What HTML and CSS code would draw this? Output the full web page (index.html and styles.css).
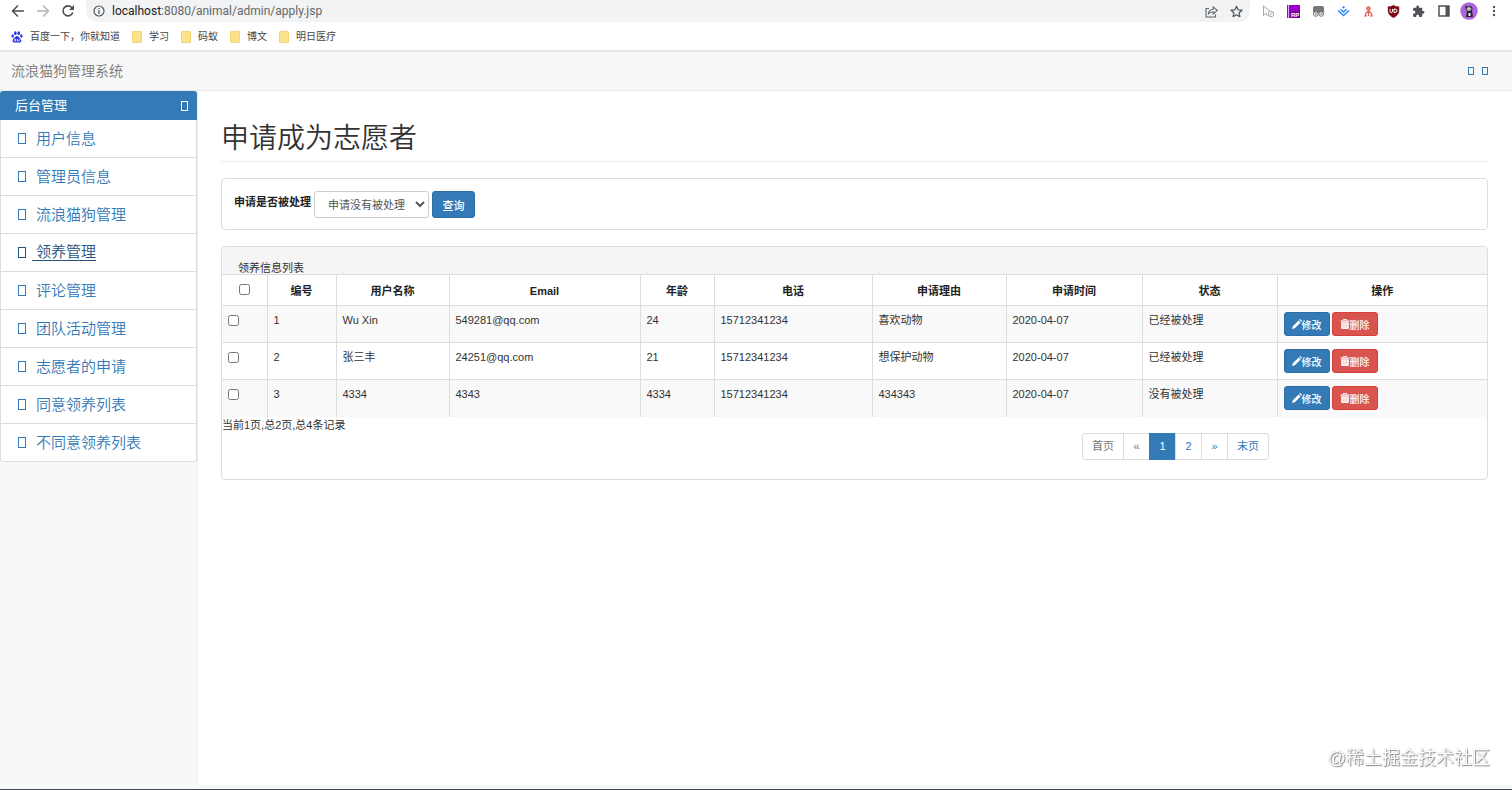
FILE: index.html
```html
<!DOCTYPE html>
<html lang="zh-CN">
<head>
  <meta charset="UTF-8">
  <meta name="viewport" content="width=device-width, initial-scale=1">
  <title>流浪猫狗管理系统</title>
  <link rel="stylesheet" href="styles.css">
</head>
<body>
  <!-- browser bar -->
  <header class="browser">
    <div class="toolbar">
      <button class="tool" aria-label="后退"><svg width="14" height="14" viewBox="0 0 14 14" fill="none" stroke="#4a4d51" stroke-width="1.5"><path d="M13 7H2M7 1.500L1.500 7L7 12.500"/></svg></button>
      <button class="tool" aria-label="前进"><svg width="14" height="14" viewBox="0 0 14 14" fill="none" stroke="#b4b6b9" stroke-width="1.5"><path d="M1 7h11M7 1.500L12.500 7L7 12.500"/></svg></button>
      <button class="tool" aria-label="刷新"><svg width="14" height="14" viewBox="0 0 14 14"><path d="M11.800 8.500A5 5 0 1 1 10.800 3.500L12 4.800" fill="none" stroke="#4a4d51" stroke-width="1.600"/><path d="M13 1v5H8z" fill="#4a4d51"/></svg></button>
      <div class="omnibox">
        <svg width="12" height="12" viewBox="0 0 12 12"><circle cx="6" cy="6" r="5" fill="none" stroke="#55585c" stroke-width="1.200"/><path d="M6 5.300V9M6 3v1.300" stroke="#55585c" stroke-width="1.300"/></svg>
        <span class="url"><span class="host">localhost</span>:8080/animal/admin/apply.jsp</span>
        <button class="tool" aria-label="分享"><svg width="13" height="13" viewBox="0 0 13 13" fill="none" stroke="#606368" stroke-width="1.100"><path d="M4 3.500H1v8.500h9.500V9.500"/><path d="M3.300 9C3.800 6 5.500 4.500 8.200 4.300V1.800L12.300 5.400L8.200 9V6.700C6 6.700 4.500 7.300 3.300 9z" stroke-linejoin="round"/></svg></button>
        <button class="tool" aria-label="收藏"><svg width="13" height="13" viewBox="0 0 13 13"><path d="M6.500 1.200L8.100 4.800L12 5.200L9.100 7.800L9.900 11.700L6.500 9.700L3.100 11.700L3.900 7.800L1 5.200L4.900 4.800z" fill="none" stroke="#505357" stroke-width="1.200" stroke-linejoin="round"/></svg></button>
      </div>
      <div class="extensions">
        <button class="tool" aria-label="光标扩展"><svg width="13" height="13" viewBox="0 0 13 13" fill="none" stroke="#aaa"><path d="M1.500 1v9.500L4 8.200L5.200 11M1.500 1L8.500 6.500"/><circle cx="9" cy="9" r="2.700"/><path d="M7.200 10.800L10.800 7.200"/></svg></button>
        <button class="tool" aria-label="RP"><svg width="13" height="13" viewBox="0 0 13 13"><path d="M0 0h13v13H0z" fill="#9900cc"/><path d="M1.500 0v13" stroke="#e9a8ff"/><path d="M3 6h10v7H3z" fill="#7a00a8"/><text x="4" y="12" font-family="Liberation Sans" font-size="6" font-weight="700" fill="#fff">RP</text></svg></button>
        <button class="tool" aria-label="脚本扩展"><svg width="13" height="13" viewBox="0 0 13 13"><path d="M3 1h7q2 0 2 2v5H1V3q0-2 2-2z" fill="#777"/><circle cx="3.800" cy="9" r="2.300" fill="#f4f4f4" stroke="#777"/><circle cx="9.200" cy="9" r="2.300" fill="#f4f4f4" stroke="#777"/><path d="M3.800 8v2M9.200 8v2" stroke="#777"/></svg></button>
        <button class="tool" aria-label="掘金"><svg width="13" height="13" viewBox="0 0 13 13" fill="none" stroke="#2684ff" stroke-width="1.500"><path d="M1 5.500L6.500 10.500L12 5.500M3.500 4.300L6.500 7L9.500 4.300"/><path d="M5 2.300L6.500 1L8 2.300L6.500 3.700z" fill="#2684ff" stroke="none"/></svg></button>
        <button class="tool" aria-label="网络扩展"><svg width="11" height="11" viewBox="0 0 11 11" fill="none" stroke="#e5604f" stroke-width="1.200"><circle cx="5.500" cy="2.500" r="1.700" fill="#f09285"/><path d="M5.500 4v6M5.500 5L2.500 7.500V10M5.500 5L8.500 7.500V10M1 10h3M7 10h3"/></svg></button>
        <button class="tool" aria-label="uBlock"><svg width="13" height="13" viewBox="0 0 13 13"><path d="M6.500 0Q9 1.600 12.200 1.500V6Q12 10 6.500 13Q1 10 .8 6V1.500Q4 1.600 6.500 0z" fill="#800b16"/><path d="M3 4v2.300Q3 7.500 4.200 7.500T5.500 6.300V4M7 4v3.500h1Q10 7.300 10 5.700T8 4z" fill="none" stroke="#fff"/></svg></button>
        <button class="tool" aria-label="扩展程序"><svg width="13" height="13" viewBox="0 0 24 24" fill="#505357"><path d="M20.500 11H19V7a2 2 0 0 0-2-2h-4V3.500a2.500 2.500 0 0 0-5 0V5H4a2 2 0 0 0-2 2v3.800h1.500a2.700 2.700 0 0 1 0 5.400H2V20a2 2 0 0 0 2 2h3.800v-1.500a2.700 2.700 0 0 1 5.400 0V22H17a2 2 0 0 0 2-2v-4h1.500a2.500 2.500 0 0 0 0-5z"/></svg></button>
        <button class="tool" aria-label="侧边栏"><svg width="12" height="12" viewBox="0 0 12 12"><path d="M1 1h10v10H1z" fill="#fff" stroke="#505357" stroke-width="1.500"/><path d="M7.500 1H11v10H7.500z" fill="#505357"/></svg></button>
        <button class="tool" aria-label="用户"><svg width="18" height="18" viewBox="0 0 18 18"><circle cx="9" cy="9" r="8.700" fill="#ad63dc"/><path d="M5.500 7L5 4L8 4.500L11 4L12.500 6L12 9L13 15H6L7 9z" fill="#292331"/><ellipse cx="9" cy="7" rx="2.500" ry="1.800" fill="#eee"/><path d="M8.500 11h2v3h-2z" fill="#eee"/><circle cx="8" cy="7" r=".6"/><circle cx="10.200" cy="7" r=".6"/></svg></button>
        <button class="tool" aria-label="菜单"><svg width="4" height="12" viewBox="0 0 4 12" fill="#505357"><circle cx="2" cy="2" r="1.200"/><circle cx="2" cy="6" r="1.200"/><circle cx="2" cy="10" r="1.200"/></svg></button>
      </div>
    </div>
    <nav class="bookmarks">
      <a href="#"><svg width="12" height="12" viewBox="0 0 12 12" fill="#2932e1"><ellipse cx="4.300" cy="2.200" rx="1.300" ry="1.900"/><ellipse cx="7.700" cy="2.200" rx="1.300" ry="1.900"/><ellipse cx="1.700" cy="5" rx="1.200" ry="1.700"/><ellipse cx="10.300" cy="5" rx="1.200" ry="1.700"/><path d="M6 5Q7.400 5 8.300 6.600T10.500 9.500Q10.300 12 8 11.600H4Q1.700 12 1.500 9.500Q1.600 8 3.700 6.600Q4.600 5 6 5z"/><path d="M4.800 8H3.700v2h1.100zM6.500 8v2h1.800V8" fill="none" stroke="#fff" stroke-width=".7"/></svg>百度一下，你就知道</a>
      <a href="#"><span class="folder"></span>学习</a>
      <a href="#"><span class="folder"></span>码蚁</a>
      <a href="#"><span class="folder"></span>博文</a>
      <a href="#"><span class="folder"></span>明日医疗</a>
    </nav>
  </header>

  <div class="navbar">
    <a class="brand" href="#">流浪猫狗管理系统</a>
    <div class="nav-icons">
      <a href="#" aria-label="消息"><span class="glyph"></span></a>
      <a href="#" aria-label="用户"><span class="glyph"></span></a>
    </div>
  </div>

  <div class="wrapper">
    <aside class="sidebar">
      <a class="side-title" href="#">后台管理<span class="glyph"></span></a>
      <ul class="side-list">
        <li><a href="#"><span class="glyph"></span><span class="name">用户信息</span></a></li>
        <li><a href="#"><span class="glyph"></span><span class="name">管理员信息</span></a></li>
        <li><a href="#"><span class="glyph"></span><span class="name">流浪猫狗管理</span></a></li>
        <li><a class="hover" href="#"><span class="glyph"></span><span class="name">领养管理</span></a></li>
        <li><a href="#"><span class="glyph"></span><span class="name">评论管理</span></a></li>
        <li><a href="#"><span class="glyph"></span><span class="name">团队活动管理</span></a></li>
        <li><a href="#"><span class="glyph"></span><span class="name">志愿者的申请</span></a></li>
        <li><a href="#"><span class="glyph"></span><span class="name">同意领养列表</span></a></li>
        <li><a href="#"><span class="glyph"></span><span class="name">不同意领养列表</span></a></li>
      </ul>
    </aside>

    <main class="page">
      <h1 class="page-header">申请成为志愿者</h1>

      <form class="panel search">
        <label for="state">申请是否被处理</label>
        <select id="state" class="form-control">
          <option>申请没有被处理</option>
          <option>申请已经被处理</option>
        </select>
        <button type="button" class="btn btn-primary">查询</button>
      </form>

      <section class="panel">
        <div class="panel-heading">领养信息列表</div>
        <table class="table">
          <colgroup>
            <col class="c-check"><col class="c-id"><col class="c-name"><col class="c-email"><col class="c-age"><col class="c-phone"><col class="c-reason"><col class="c-time"><col class="c-state"><col class="c-action">
          </colgroup>
          <thead>
            <tr>
              <th><input type="checkbox" aria-label="全选"></th>
              <th>编号</th>
              <th>用户名称</th>
              <th>Email</th>
              <th>年龄</th>
              <th>电话</th>
              <th>申请理由</th>
              <th>申请时间</th>
              <th>状态</th>
              <th>操作</th>
            </tr>
          </thead>
          <tbody>
            <tr>
              <td><input type="checkbox" aria-label="选择 1"></td>
              <td>1</td>
              <td>Wu Xin</td>
              <td>549281@qq.com</td>
              <td>24</td>
              <td>15712341234</td>
              <td>喜欢动物</td>
              <td>2020-04-07</td>
              <td>已经被处理</td>
              <td><div class="actions"><button class="btn btn-primary btn-sm"><svg class="icon"><use href="#pencil"/></svg>修改</button><button class="btn btn-danger btn-sm"><svg class="icon"><use href="#trash"/></svg>删除</button></div></td>
            </tr>
            <tr>
              <td><input type="checkbox" aria-label="选择 2"></td>
              <td>2</td>
              <td>张三丰</td>
              <td>24251@qq.com</td>
              <td>21</td>
              <td>15712341234</td>
              <td>想保护动物</td>
              <td>2020-04-07</td>
              <td>已经被处理</td>
              <td><div class="actions"><button class="btn btn-primary btn-sm"><svg class="icon"><use href="#pencil"/></svg>修改</button><button class="btn btn-danger btn-sm"><svg class="icon"><use href="#trash"/></svg>删除</button></div></td>
            </tr>
            <tr>
              <td><input type="checkbox" aria-label="选择 3"></td>
              <td>3</td>
              <td>4334</td>
              <td>4343</td>
              <td>4334</td>
              <td>15712341234</td>
              <td>434343</td>
              <td>2020-04-07</td>
              <td>没有被处理</td>
              <td><div class="actions"><button class="btn btn-primary btn-sm"><svg class="icon"><use href="#pencil"/></svg>修改</button><button class="btn btn-danger btn-sm"><svg class="icon"><use href="#trash"/></svg>删除</button></div></td>
            </tr>
          </tbody>
        </table>
        <p class="total">当前1页,总2页,总4条记录</p>
        <nav class="pagination">
          <a class="disabled" href="#">首页</a>
          <a class="disabled" href="#">«</a>
          <a class="active" href="#">1</a>
          <a href="#">2</a>
          <a href="#">»</a>
          <a href="#">末页</a>
        </nav>
      </section>
    </main>
  </div>
  <div class="taskbar"></div>
  <div class="watermark">@稀土掘金技术社区</div>

  <svg class="sprite">
    <symbol id="pencil" viewBox="0 0 10 10"><path d="M0 10L.8 7.200L6.600 1.400L8.600 3.400L2.800 9.200zM7.200 .8L7.800.2Q8.100 0 8.400.2L9.800 1.600Q10 2 9.800 2.200L9.200 2.800z" fill="#fff"/></symbol>
    <symbol id="trash" viewBox="0 0 10 10"><path d="M3.200 1.500V.5h3.600v1" fill="none" stroke="#fff" stroke-width=".9"/><path d="M.5 1.400h9v1.400h-9zM1.200 3.300h7.600V9Q8.800 10 8 10H2Q1.200 10 1.200 9z" fill="#fff"/><path d="M3.200 4.300v4.500M5 4.300v4.500M6.800 4.300v4.500" stroke="#e39a8c" stroke-width=".6"/></symbol>
  </svg>
</body>
</html>
```
FILE: styles.css
```css
* {
  box-sizing: border-box;
}
body {
  margin: 0;
  min-height: 100vh;
  display: flex;
  flex-direction: column;
  background: #f8f8f8;
  color: #333;
  font-family: "Liberation Sans", "Noto Sans CJK SC", sans-serif;
  font-size: 11px;
  line-height: 16px;
}
a {
  color: #337ab7;
  text-decoration: none;
}
button,
select {
  font-family: inherit;
}
svg {
  flex: none;
}

/* browser bar */
.browser {
  background: #fff;
  border-bottom: 2px solid #e7e7e7;
}
.toolbar {
  display: flex;
  align-items: center;
  height: 22px;
  padding: 0 6px 0 5px;
}
.tool {
  display: flex;
  align-items: center;
  justify-content: center;
  width: 25px;
  height: 22px;
  padding: 0;
  border: none;
  background: none;
}
.omnibox {
  flex: 1;
  display: flex;
  align-items: center;
  height: 22px;
  margin: 0 6px;
  padding: 0 1px 0 7px;
  border-radius: 0 0 11px 11px;
  background: #f1f3f4;
}
.url {
  flex: 1;
  margin-left: 7px;
  color: #666;
  font-family: Roboto, sans-serif;
  font-size: 12px;
}
.host {
  color: #222;
}
.extensions {
  display: flex;
}
.bookmarks {
  display: flex;
  gap: 12px;
  height: 28px;
  padding: 1px 11px 0;
}
.bookmarks a {
  display: flex;
  align-items: center;
  gap: 7px;
  color: #444;
  font-size: 10px;
}
.folder {
  width: 10px;
  height: 12px;
  border: 1px solid #f3d67a;
  border-radius: 1px;
  background: #fbe28b;
}

/* missing icon font box */
.glyph {
  display: inline-block;
  flex: none;
  width: 6px;
  height: 8px;
  border: 1px solid currentColor;
}

.navbar {
  display: flex;
  align-items: center;
  justify-content: space-between;
  height: 39px;
  padding: 0 24px 0 11px;
  border-bottom: 1px solid #e7e7e7;
}
.brand {
  color: #777;
  font-size: 14px;
  font-weight: 350;
}
.nav-icons {
  display: flex;
  gap: 8px;
}
.nav-icons a {
  display: flex;
}

.wrapper {
  flex: 1;
  display: flex;
}
.sidebar {
  width: 197px;
  flex: none;
}
.side-title {
  display: flex;
  align-items: center;
  justify-content: space-between;
  height: 29px;
  padding: 0 9px 0 15px;
  border-radius: 3px 3px 0 0;
  background: #337ab7;
  color: #fff;
  font-size: 13px;
}
.side-title .glyph {
  width: 7px;
  height: 10px;
}
.side-list {
  margin: 0;
  padding: 0;
  list-style: none;
  background: #fff;
  border: 1px solid #ddd;
  border-top: none;
  border-radius: 0 0 3px 3px;
}
.side-list li + li {
  border-top: 1px solid #ddd;
}
.side-list a {
  display: flex;
  align-items: center;
  height: 37px;
  padding-left: 17px;
  font-size: 15px;
  font-weight: 350;
}
.side-list .glyph {
  width: 8px;
  height: 11px;
  margin-right: 6px;
}
.side-list .name {
  padding-left: 4px;
}
.side-list .hover {
  color: #23527c;
}
.side-list .hover .name {
  border-bottom: 1px solid #23527c;
}

.page {
  flex: 1;
  min-width: 0;
  padding: 24px 24px 0 23px;
  background: #fff;
  border-left: 1px solid #eee;
}
.page-header {
  margin: 0 0 16px;
  padding: 4px 0 2px;
  border-bottom: 1px solid #eee;
  font-size: 28px;
  font-weight: 350;
  line-height: 40px;
}
.panel {
  margin-bottom: 16px;
  border: 1px solid #ddd;
  border-radius: 4px;
}
.search {
  display: flex;
  align-items: flex-start;
  gap: 3px;
  padding: 12px 12px 11px;
}
.search label {
  padding-top: 3px;
  color: #222;
  font-weight: 700;
}
.form-control {
  width: 115px;
  height: 27px;
  padding: 0 0 0 9px;
  border: 1px solid #ccc;
  border-radius: 3px;
  background: #fff;
  color: #555;
  font-size: 11px;
}
.btn {
  display: inline-flex;
  align-items: center;
  justify-content: center;
  height: 27px;
  padding: 0 9px;
  border: 1px solid transparent;
  border-radius: 3px;
  color: #fff;
  font-size: 11px;
  font-weight: 500;
}
.btn-sm {
  height: 24px;
  padding: 0 7px;
  font-size: 10px;
}
.search .btn {
  width: 43px;
}
.btn-primary {
  background: #337ab7;
  border-color: #2e6da4;
}
.btn-danger {
  background: #d9534f;
  border-color: #d43f3a;
}
.icon {
  width: 10px;
  height: 10px;
}
.panel-heading {
  height: 28px;
  padding: 13px 16px 0;
  background: #f5f5f5;
  border-bottom: 1px solid #ddd;
  border-radius: 3px 3px 0 0;
}

.table {
  width: 100%;
  table-layout: fixed;
  border-collapse: collapse;
}
.c-check { width: 45px; }
.c-id { width: 69px; }
.c-name { width: 113px; }
.c-email { width: 191px; }
.c-age { width: 74px; }
.c-phone { width: 158px; }
.c-reason { width: 134px; }
.c-time { width: 136px; }
.c-state { width: 135px; }
.c-action { width: 210px; }
.table th,
.table td {
  padding: 6px;
  vertical-align: top;
  border-left: 1px solid #ddd;
}
.table th:first-child,
.table td:first-child {
  border-left: none;
}
.table th {
  height: 30px;
  padding: 8px 6px 6px;
  color: #222;
  font-weight: 700;
}
.table td {
  height: 37px;
  border-top: 1px solid #ddd;
}
.table tbody tr:nth-child(odd) {
  background: #f9f9f9;
}
.table input {
  display: block;
  width: 11px;
  height: 11px;
  margin: 3px 0 0;
}
.table th input {
  margin: 1px auto 0;
}
.actions {
  display: flex;
  gap: 2px;
}

.total {
  margin: 0;
}
.pagination {
  display: flex;
  justify-content: flex-end;
  margin: 0 218px 19px 0;
}
.pagination a {
  min-width: 27px;
  margin-left: -1px;
  padding: 5px 9px;
  border: 1px solid #ddd;
  line-height: 15px;
  text-align: center;
}
.pagination a:first-child {
  border-radius: 3px 0 0 3px;
}
.pagination a:last-child {
  border-radius: 0 3px 3px 0;
}
.pagination .disabled {
  color: #777;
}
.pagination .active {
  background: #337ab7;
  border-color: #337ab7;
  color: #fff;
}

.taskbar {
  height: 5px;
  background: #f5f8fa;
  border-bottom: 1px solid #454b50;
}
.watermark {
  position: fixed;
  right: 22px;
  bottom: 19px;
  color: #fff;
  font-size: 18px;
  font-weight: 350;
  line-height: 26px;
  text-shadow: 1px 1px 1px #888, 0 0 1px #999;
}
.sprite {
  position: absolute;
  width: 0;
  height: 0;
}
```
